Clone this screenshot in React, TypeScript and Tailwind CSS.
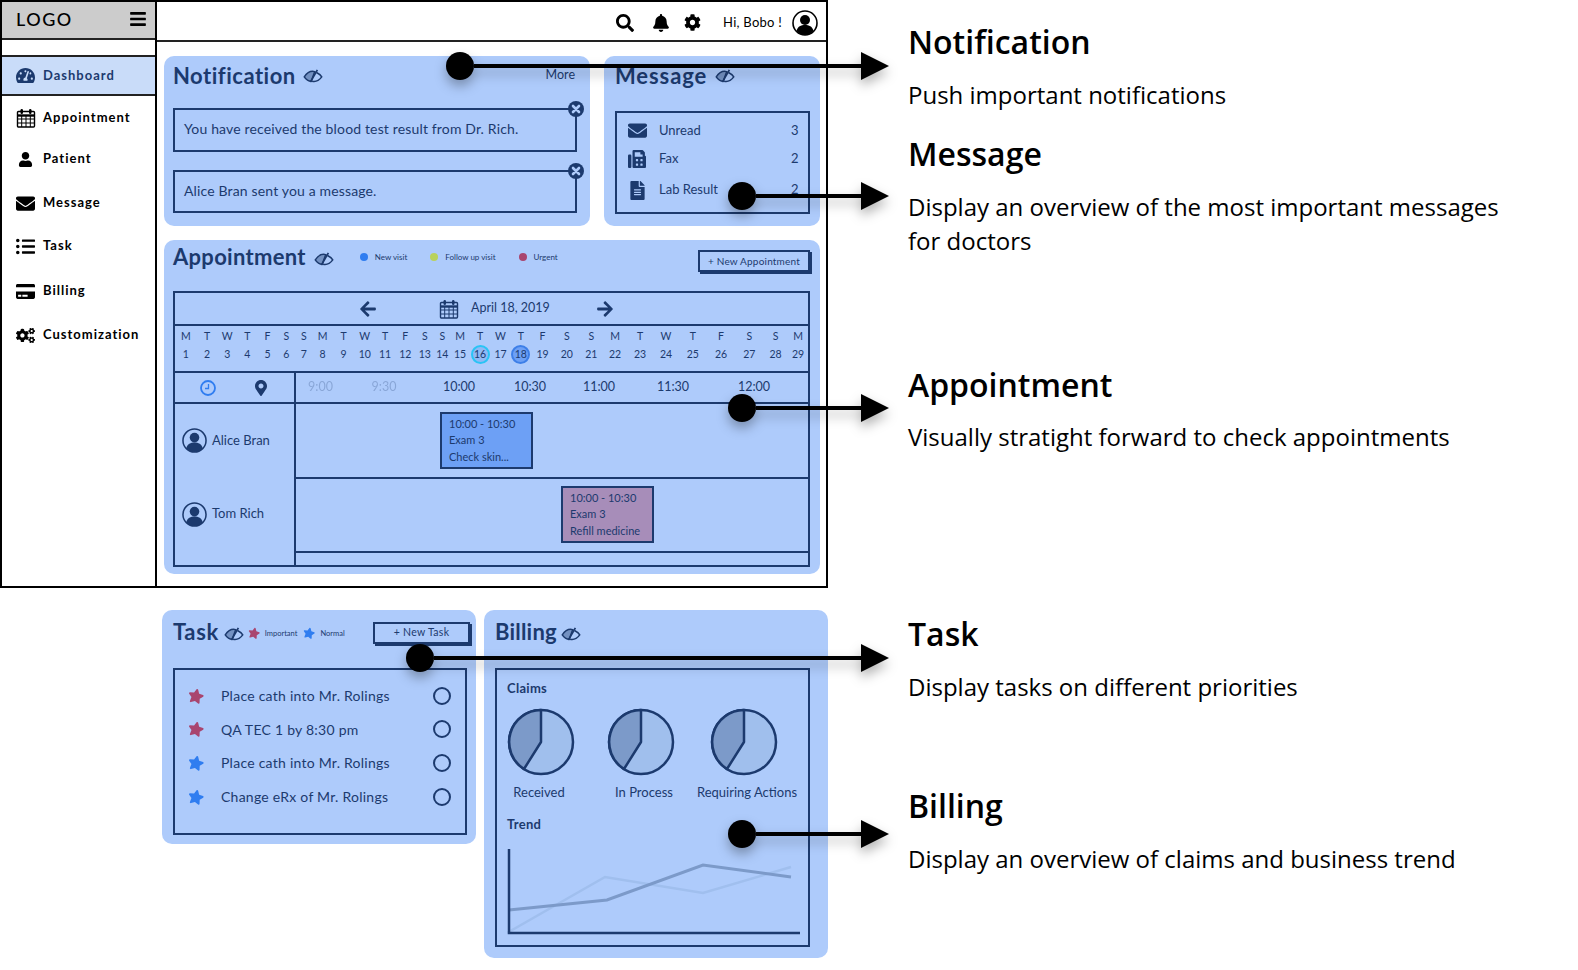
import React from "react";
import {
  FaArrowLeft, FaArrowRight, FaBars, FaBell, FaCog, FaCogs, FaCreditCard, FaEnvelope, FaFax, FaFileAlt,
  FaListUl, FaMapMarkerAlt, FaSearch, FaStar, FaTachometerAlt, FaUser,
} from "react-icons/fa";

const NAVY = "#1c3a6e";

function Eye() {
  return (
    <svg viewBox="0 0 22 16" className="h-[14px] w-[20px] shrink-0" fill="none" stroke={NAVY} strokeWidth="1.7">
      <path d="M1 9 C5 3 9 2 13 3 L9 14 C6 14 3 12 1 9Z" fill={NAVY} fillOpacity="0.4" />
      <path d="M15 4 C17 5 20 7 21 9 C18 13 14 15 10 14" />
      <path d="M16 1 L8 15" strokeWidth="2" />
    </svg>
  );
}

function Avatar({ className }: { className: string }) {
  return (
    <svg viewBox="0 0 26 26" className={className}>
      <circle cx="13" cy="13" r="12" fill="none" stroke="currentColor" strokeWidth="1.6" />
      <circle cx="13" cy="10" r="5" fill="currentColor" />
      <path d="M4.5 21 C5.5 16.5 9 15 13 15 C17 15 20.5 16.5 21.5 21 C19.5 23.5 16.5 25 13 25 C9.5 25 6.5 23.5 4.5 21Z" fill="currentColor" />
    </svg>
  );
}

function CalendarIcon({ className }: { className: string }) {
  return (
    <svg viewBox="0 0 20 20" className={className} fill="none" stroke="currentColor" strokeWidth="1">
      <rect x="1.5" y="3.5" width="17" height="15.5" rx="1" strokeWidth="1.4" />
      <path d="M1.5 7.5 H18.5" strokeWidth="2.4" />
      <path d="M1.5 11 H18.5 M1.5 15 H18.5 M5.7 8 V19 M10 8 V19 M14.3 8 V19" />
      <rect x="4.5" y="1" width="2.5" height="5" rx="1.2" fill="currentColor" stroke="none" />
      <rect x="13" y="1" width="2.5" height="5" rx="1.2" fill="currentColor" stroke="none" />
    </svg>
  );
}

function CloseBadge({ className }: { className: string }) {
  return (
    <svg viewBox="0 0 16 16" className={className}>
      <circle cx="8" cy="8" r="8" fill={NAVY} />
      <path d="M5 5 L11 11 M11 5 L5 11" stroke="#aecbfb" strokeWidth="2.6" strokeLinecap="round" />
    </svg>
  );
}

function Pie() {
  return (
    <svg viewBox="0 0 68 68" className="h-[68px] w-[68px]">
      <circle cx="34" cy="34" r="32" fill="#a0bfed" stroke={NAVY} strokeWidth="2.5" />
      <path d="M34 2 V34 L17 61 A32 32 0 0 1 34 2Z" fill="#7c9ac9" stroke={NAVY} strokeWidth="2.5" strokeLinejoin="round" />
    </svg>
  );
}

function Callout({ className }: { className: string }) {
  return (
    <div className={`absolute flex h-[28px] items-center drop-shadow-[0_6px_6px_rgba(0,0,0,0.3)] ${className}`}>
      <div className="h-[28px] w-[28px] shrink-0 rounded-full bg-black" />
      <div className="h-[4px] flex-1 bg-black" />
      <svg viewBox="0 0 28 28" className="h-[28px] w-[28px] shrink-0">
        <path d="M0 0 L28 14 L0 28Z" fill="#000" />
      </svg>
    </div>
  );
}

const nav = [
  { label: "Appointment", icon: <CalendarIcon className="h-[20px] w-[20px]" />, cls: "h-[44px]" },
  { label: "Patient", icon: <FaUser className="ml-[2px] h-[15px] w-[15px]" />, cls: "h-[38px]" },
  { label: "Message", icon: <FaEnvelope className="h-[19px] w-[19px]" />, cls: "h-[50px]" },
  { label: "Task", icon: <FaListUl className="h-[19px] w-[19px]" />, cls: "h-[36px]" },
  { label: "Billing", icon: <FaCreditCard className="h-[19px] w-[19px]" />, cls: "h-[54px]" },
  { label: "Customization", icon: <FaCogs className="h-[19px] w-[19px]" />, cls: "h-[34px]" },
];

const letters = "MTWTFSSMTWTFSSMTWTFSSMTWTFSSM".split("");

function Legend({ color, label }: { color: string; label: string }) {
  return (
    <div className="flex items-center gap-[7px]">
      <span className={`h-[8px] w-[8px] rounded-full ${color}`} />
      <span className="text-[8px] leading-none">{label}</span>
    </div>
  );
}

function Person({ name }: { name: string }) {
  return (
    <div className="flex items-center gap-[5px] pl-[7px]">
      <Avatar className="h-[25px] w-[25px]" />
      <span className="text-[13px]">{name}</span>
    </div>
  );
}

function EventCard({ className, lines }: { className: string; lines: string[] }) {
  return (
    <div className={`flex h-[57px] w-[93px] flex-col justify-center border-2 border-[#1c3a6e] pl-[7px] text-[11px] leading-[16.5px] ${className}`}>
      {lines.map((l) => (
        <span key={l} className="whitespace-nowrap">{l}</span>
      ))}
    </div>
  );
}

function MsgRow({ icon, label, value, cls }: { icon: React.ReactNode; label: string; value: string; cls: string }) {
  return (
    <div className={`flex items-center ${cls}`}>
      <div className="flex w-[42px] justify-center pr-[2px]">{icon}</div>
      <span className="flex-1 text-[13px]">{label}</span>
      <span className="w-[17px] text-[13px]">{value}</span>
    </div>
  );
}

function Task({ color, text }: { color: string; text: string }) {
  return (
    <div className="flex h-[33.6px] items-center">
      <FaStar className={`ml-[13px] h-[16px] w-[16px] rotate-12 ${color}`} />
      <span className="ml-[17px] flex-1 text-[14px] tracking-[0.25px]">{text}</span>
      <span className="mr-[14px] h-[18px] w-[18px] rounded-full border-2 border-[#1c3a6e]" />
    </div>
  );
}

function Note({ titleCls, title, descCls, desc }: { titleCls: string; title: string; descCls: string; desc: string }) {
  return (
    <>
      <h2 className={`h-[44px] text-[32px] font-semibold leading-[44px] ${titleCls}`}>{title}</h2>
      <p className={`max-w-[610px] text-[24px] leading-[34px] ${descCls}`}>{desc}</p>
    </>
  );
}

export default function App() {
  return (
    <div className="relative flex h-[970px] w-[1578px] overflow-hidden bg-white font-['Lato',sans-serif] text-[#1c3a6e]">
      <div className="flex w-[828px] shrink-0 flex-col">
        {/* Wireframe */}
        <div className="flex h-[588px] shrink-0 border-2 border-black">
          <aside className="flex w-[155px] shrink-0 flex-col border-r-2 border-black text-black">
            <div className="flex h-[38px] items-center justify-between border-b-2 border-[#222] bg-[#cccccc] pb-[2px] pl-[14px] pr-[9px]">
              <span className="text-[18px] font-medium tracking-[1.5px]">LOGO</span>
              <FaBars className="h-[18px] w-[16px]" />
            </div>
            <div className="h-[17px] border-b-2 border-[#222]" />
            <div className="flex h-[39px] items-center gap-[8px] border-b-2 border-[#222] bg-[#c9dcf9] pl-[14px] text-[13px] font-bold tracking-[1px] text-[#1c3a6e]">
              <FaTachometerAlt className="h-[19px] w-[19px]" />
              Dashboard
            </div>
            {nav.map((n) => (
              <div key={n.label} className={`flex items-center pl-[14px] text-[13px] font-bold tracking-[1px] ${n.cls}`}>
                <span className="flex w-[27px] justify-start">{n.icon}</span>
                {n.label}
              </div>
            ))}
          </aside>

          <main className="flex min-w-0 flex-1 flex-col">
            <header className="flex h-[40px] shrink-0 items-center justify-end border-b-2 border-[#222] pr-[8px] pt-[3px] text-black">
              <FaSearch className="h-[18px] w-[18px]" />
              <FaBell className="ml-[18px] h-[18px] w-[18px]" />
              <FaCog className="ml-[14px] h-[17px] w-[17px]" />
              <span className="ml-[22px] text-[13px] tracking-[0.25px]">Hi, Bobo !</span>
              <Avatar className="ml-[10px] h-[26px] w-[26px]" />
            </header>

            <div className="flex flex-col gap-[14px] pl-[7px] pr-[6px] pt-[14px]">
              <div className="flex gap-[14px]">
                {/* Notification */}
                <section className="flex h-[170px] w-[426px] flex-col rounded-[10px] bg-[#aecbfb] pl-[9px] pr-[13px]">
                  <div className="flex h-[38px] shrink-0 items-center pt-[1px]">
                    <h3 className="text-[22px] font-bold leading-none tracking-[0.5px]">Notification</h3>
                    <span className="ml-[7px]"><Eye /></span>
                    <span className="ml-auto pr-[2px] text-[12.5px]">More</span>
                  </div>
                  <div className="relative mt-[14px] flex h-[44px] shrink-0 items-center border-2 border-[#1c3a6e] pb-[3px] pl-[9px] text-[14px] tracking-[0.15px]">
                    You have received the blood test result from Dr. Rich.
                    <CloseBadge className="absolute -right-[9px] -top-[9px] h-[16px] w-[16px]" />
                  </div>
                  <div className="relative mt-[18px] flex h-[43px] shrink-0 items-center border-2 border-[#1c3a6e] pb-[3px] pl-[9px] text-[14px] tracking-[0.15px]">
                    Alice Bran sent you a message.
                    <CloseBadge className="absolute -right-[9px] -top-[9px] h-[16px] w-[16px]" />
                  </div>
                </section>

                {/* Message */}
                <section className="flex h-[170px] w-[216px] flex-col rounded-[10px] bg-[#aecbfb] pl-[11px] pr-[10px]">
                  <div className="flex h-[38px] shrink-0 items-center pt-[1px]">
                    <h3 className="text-[22px] font-bold leading-none tracking-[0.9px]">Message</h3>
                    <span className="ml-[8px]"><Eye /></span>
                  </div>
                  <div className="mt-[17px] flex h-[103px] shrink-0 flex-col border-2 border-[#1c3a6e] pt-[3px]">
                    <MsgRow cls="h-[29px]" label="Unread" value="3" icon={<FaEnvelope className="h-[19px] w-[19px]" />} />
                    <MsgRow cls="h-[28px]" label="Fax" value="2" icon={<FaFax className="h-[18px] w-[18px]" />} />
                    <MsgRow cls="h-[34px]" label="Lab Result" value="2" icon={<FaFileAlt className="h-[19px] w-[15px]" />} />
                  </div>
                </section>
              </div>

              {/* Appointment */}
              <section className="h-[334px] w-[656px] rounded-[10px] bg-[#aecbfb] pl-[9px] pr-[10px]">
                <div className="flex h-[51px] items-start pt-[5px]">
                  <h3 className="text-[22px] font-bold leading-[24px] tracking-[0.3px]">Appointment</h3>
                  <span className="ml-[8px] mt-[7px]"><Eye /></span>
                  <div className="ml-[26px] mt-[8px] flex gap-[23px]">
                    <Legend color="bg-[#2f7df0]" label="New visit" />
                    <Legend color="bg-[#b9d25c]" label="Follow up visit" />
                    <Legend color="bg-[#a9456f]" label="Urgent" />
                  </div>
                  <div className="ml-auto mt-[5px] flex h-[22px] w-[112px] items-center justify-center border-2 border-[#1c3a6e] text-[10px] tracking-[0.2px] shadow-[2px_2px_0_#1c3a6e]">
                    + New Appointment
                  </div>
                </div>

                <div className="flex h-[276px] flex-col border-2 border-[#1c3a6e]">
                  <div className="flex h-[33px] shrink-0 items-center border-b-2 border-[#1c3a6e] text-[12.5px]">
                    <FaArrowLeft className="ml-[184px] h-[18px] w-[18px]" />
                    <CalendarIcon className="ml-[62px] h-[20px] w-[20px]" />
                    <span className="ml-[12px] w-[76px] whitespace-nowrap">April 18, 2019</span>
                    <FaArrowRight className="ml-[49px] h-[18px] w-[18px]" />
                  </div>

                  <div className="grid h-[47px] shrink-0 grid-cols-[21.5px_21px_19.5px_20.5px_20px_17.5px_17.5px_20px_22px_20.5px_20px_20.5px_18.5px_16.5px_19px_21px_20px_20.5px_23px_25.5px_23.5px_24px_26px_26px_27.5px_29px_27.5px_25px_20px] grid-rows-[18px_17px] content-start border-b-2 border-[#1c3a6e] pt-[2px] text-center text-[10.5px]">
                    {letters.map((l, i) => (
                      <span key={i} className="flex items-center justify-center">{l}</span>
                    ))}
                    {letters.map((_, i) => {
                      const d = i + 1;
                      return (
                        <span key={d} className="flex items-center justify-center">
                          {d === 16 ? (
                            <span className="flex h-[19px] w-[19px] shrink-0 items-center justify-center rounded-full border-2 border-[#29c4f5] bg-[#8fb9f5]">16</span>
                          ) : d === 18 ? (
                            <span className="flex h-[19px] w-[19px] shrink-0 items-center justify-center rounded-full border-2 border-[#3d7fe8] bg-[#6da0f5]">18</span>
                          ) : (
                            d
                          )}
                        </span>
                      );
                    })}
                  </div>

                  <div className="flex min-h-0 flex-1">
                    <div className="flex w-[121px] shrink-0 flex-col border-r-2 border-[#1c3a6e]">
                      <div className="flex h-[31px] shrink-0 items-center border-b-2 border-[#1c3a6e]">
                        <svg viewBox="0 0 16 16" className="ml-[25px] h-[16px] w-[16px]" fill="none" stroke="#2f7df0" strokeWidth="1.8">
                          <circle cx="8" cy="8" r="7" />
                          <path d="M8.5 4 V8.5 H5" strokeWidth="1.3" />
                        </svg>
                        <FaMapMarkerAlt className="ml-[39px] h-[16px] w-[12px]" />
                      </div>
                      <div className="flex h-[76px] shrink-0 items-center pb-[3px]"><Person name="Alice Bran" /></div>
                      <div className="flex h-[72px] shrink-0 items-center pb-[4px]"><Person name="Tom Rich" /></div>
                    </div>
                    <div className="flex min-w-0 flex-1 flex-col">
                      <div className="grid h-[31px] shrink-0 grid-cols-[49px_78px_72px_70px_68px_80px_82px] items-center border-b-2 border-[#1c3a6e] text-center text-[12.5px]">
                        <span className="opacity-25">9:00</span>
                        <span className="opacity-25">9:30</span>
                        <span>10:00</span>
                        <span>10:30</span>
                        <span>11:00</span>
                        <span>11:30</span>
                        <span>12:00</span>
                      </div>
                      <div className="h-[75px] shrink-0 border-b-2 border-[#1c3a6e] pl-[144px] pt-[8px]">
                        <EventCard className="bg-[#6da0f5]" lines={["10:00 - 10:30", "Exam 3", "Check skin..."]} />
                      </div>
                      <div className="h-[74px] shrink-0 border-b-2 border-[#1c3a6e] pl-[265px] pt-[7px]">
                        <EventCard className="bg-[#a78db9]" lines={["10:00 - 10:30", "Exam 3", "Refill medicine"]} />
                      </div>
                    </div>
                  </div>
                </div>
              </section>
            </div>
          </main>
        </div>

        {/* Detached panels */}
        <div className="ml-[162px] mt-[22px] flex items-start gap-[8px]">
          <section className="flex h-[234px] w-[314px] flex-col rounded-[10px] bg-[#aecbfb] pl-[11px] pr-[6px]">
            <div className="flex h-[58px] shrink-0 items-start pt-[10px]">
              <h3 className="text-[22px] font-bold leading-[24px] tracking-[0.6px]">Task</h3>
              <span className="ml-[5px] mt-[7px]"><Eye /></span>
              <FaStar className="ml-[4px] mt-[7px] h-[12px] w-[12px] rotate-12 text-[#a9456f]" />
              <span className="ml-[5px] mt-[10px] text-[7.5px] leading-none">Important</span>
              <FaStar className="ml-[6px] mt-[7px] h-[12px] w-[12px] rotate-12 text-[#2f7df0]" />
              <span className="ml-[5px] mt-[10px] text-[7.5px] leading-none">Normal</span>
              <div className="ml-auto mt-[2px] flex h-[22px] w-[97px] items-center justify-center border-2 border-[#1c3a6e] text-[10.5px] tracking-[0.3px] shadow-[2px_2px_0_#1c3a6e]">
                + New Task
              </div>
            </div>
            <div className="flex h-[167px] w-[294px] shrink-0 flex-col border-2 border-[#1c3a6e] pt-[9px]">
              <Task color="text-[#a9456f]" text="Place cath into Mr. Rolings" />
              <Task color="text-[#a9456f]" text="QA TEC 1 by 8:30 pm" />
              <Task color="text-[#2f7df0]" text="Place cath into Mr. Rolings" />
              <Task color="text-[#2f7df0]" text="Change eRx of Mr. Rolings" />
            </div>
          </section>

          <section className="flex h-[348px] w-[344px] flex-col rounded-[10px] bg-[#aecbfb] pl-[11px] pr-[18px]">
            <div className="flex h-[58px] shrink-0 items-start pt-[10px]">
              <h3 className="text-[22px] font-bold leading-[24px] tracking-[0.2px]">Billing</h3>
              <span className="ml-[4px] mt-[7px]"><Eye /></span>
            </div>
            <div className="flex h-[279px] shrink-0 flex-col border-2 border-[#1c3a6e] pl-[10px]">
              <span className="mt-[10px] text-[13px] font-bold leading-[16px] tracking-[0.3px]">Claims</span>
              <div className="mt-[12px] grid grid-cols-[100px_103px_68px] justify-items-start">
                <Pie />
                <Pie />
                <Pie />
              </div>
              <div className="-ml-[20px] mt-[7px] grid grid-cols-[104px_106px_100px] text-center text-[13px] leading-[18px]">
                <span>Received</span>
                <span>In Process</span>
                <span className="whitespace-nowrap">Requiring Actions</span>
              </div>
              <span className="mt-[15px] text-[13px] font-bold leading-[16px] tracking-[0.3px]">Trend</span>
              <svg viewBox="0 0 298 92" className="mt-[13px] h-[92px] w-[298px]" fill="none">
                <path d="M0 88 L98 32 L196 48 L284 22" stroke="#a0bfee" strokeWidth="2.5" />
                <path d="M2 65 L100 55 L196 20 L284 32" stroke="#7c9ac9" strokeWidth="3" />
                <path d="M2 4 V88 H293" stroke="#1c3a6e" strokeWidth="2.5" />
              </svg>
            </div>
          </section>
        </div>
      </div>

      {/* Explanations */}
      <div className="min-w-0 flex-1 pl-[80px] pt-[20px] font-['Open_Sans',sans-serif] text-black">
        <Note title="Notification" titleCls="" desc="Push important notifications" descCls="mt-[14px]" />
        <Note title="Message" titleCls="mt-[20px]" desc="Display an overview of the most important messages for doctors" descCls="mt-[14px]" />
        <Note title="Appointment" titleCls="mt-[105px]" desc="Visually stratight forward to check appointments" descCls="mt-[13px]" />
        <Note title="Task" titleCls="mt-[158px]" desc="Display tasks on different priorities" descCls="mt-[14px]" />
        <Note title="Billing" titleCls="mt-[80px]" desc="Display an overview of claims and business trend" descCls="mt-[14px]" />
      </div>

      <Callout className="left-[446px] top-[52px] w-[443px]" />
      <Callout className="left-[728px] top-[182px] w-[161px]" />
      <Callout className="left-[728px] top-[394px] w-[161px]" />
      <Callout className="left-[406px] top-[644px] w-[483px]" />
      <Callout className="left-[728px] top-[820px] w-[161px]" />
    </div>
  );
}
